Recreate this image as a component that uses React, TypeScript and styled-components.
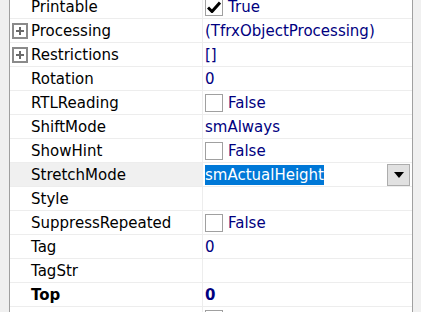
import React from "react";
import styled, { createGlobalStyle } from "styled-components";

const Global = createGlobalStyle`
  html, body { margin: 0; padding: 0; background: #fff; }
  body { width: 421px; height: 312px; overflow: hidden; font-family: "DejaVu Sans", sans-serif; }
`;

const Frame = styled.div`
  display: flex;
  width: 421px;
  height: 312px;
  overflow: hidden;
  background: #fff;
`;

const Gutter = styled.div`
  width: 9px;
  flex: none;
  background: #f0f0f0;
  border-right: 1px solid #a0a0a0;
`;

const Grid = styled.div`
  flex: 1;
  display: flex;
  flex-direction: column;
  margin-top: -5px;
  border-right: 1px solid #a0a0a0;
`;

const RightStrip = styled.div`
  width: 8px;
  flex: none;
  background: #f0f0f0;
`;

const Row = styled.div`
  display: grid;
  grid-template-columns: 193px 1fr;
  height: 23px;
  border-bottom: 1px solid #ededed;
  flex: none;
`;

const NameCell = styled.div<{ $active?: boolean; $bold?: boolean }>`
  display: flex;
  align-items: center;
  gap: 3px;
  padding-left: 21px;
  background: ${(p) => (p.$active ? "#f0f0f0" : "#fff")};
  border-right: 1px solid #ededed;
  font-size: 15px;
  color: #000;
  font-weight: ${(p) => (p.$bold ? 700 : 400)};
  white-space: nowrap;
`;

const Expander = styled.span`
  width: 12px;
  height: 12px;
  margin-left: -19px;
  border: 2px solid #8a8a8a;
  position: relative;
  flex: none;
  &::before, &::after {
    content: "";
    position: absolute;
    background: #6a6a6a;
  }
  &::before { left: 2px; right: 2px; top: 5px; height: 2px; }
  &::after { top: 2px; bottom: 2px; left: 5px; width: 2px; }
`;

const ValueCell = styled.div<{ $bold?: boolean }>`
  display: flex;
  align-items: center;
  padding-left: 2px;
  padding-right: 2px;
  font-size: 15px;
  color: #000080;
  font-weight: ${(p) => (p.$bold ? 700 : 400)};
  white-space: nowrap;
`;

const Check = styled.span`
  width: 16px;
  height: 16px;
  border: 1px solid #a0a0a0;
  background: #fff;
  margin-right: 5px;
  flex: none;
  display: flex;
  align-items: center;
  justify-content: center;
`;

const Selected = styled.span`
  background: #0078d7;
  color: #fff;
  line-height: 20px;
`;

const Spacer = styled.span`
  flex: 1;
`;

const DropButton = styled.span`
  width: 21px;
  height: 20px;
  border: 1px solid #adadad;
  background: #e1e1e1;
  display: flex;
  align-items: center;
  justify-content: center;
  flex: none;
`;

type Prop = {
  name: string;
  value?: string;
  check?: boolean;
  expand?: boolean;
  bold?: boolean;
  active?: boolean;
};

const props: Prop[] = [
  { name: "Printable", value: "True", check: true },
  { name: "Processing", value: "(TfrxObjectProcessing)", expand: true },
  { name: "Restrictions", value: "[]", expand: true },
  { name: "Rotation", value: "0" },
  { name: "RTLReading", value: "False", check: false },
  { name: "ShiftMode", value: "smAlways" },
  { name: "ShowHint", value: "False", check: false },
  { name: "StretchMode", value: "smActualHeight", active: true },
  { name: "Style", value: "" },
  { name: "SuppressRepeated", value: "False", check: false },
  { name: "Tag", value: "0" },
  { name: "TagStr", value: "" },
  { name: "Top", value: "0", bold: true },
  { name: "Visible", value: "True", check: false },
];

const CheckMark = () => (
  <svg width="14" height="12" viewBox="0 0 14 12">
    <path d="M1 6.5 L5 10.5 L13 1.5" fill="none" stroke="#000" strokeWidth="3" />
  </svg>
);

export default function App() {
  return (
    <Frame>
      <Global />
      <Gutter />
      <Grid>
        {props.map((p) => (
          <Row key={p.name}>
            <NameCell $active={p.active} $bold={p.bold}>
              {p.expand && <Expander />}
              {p.name}
            </NameCell>
            <ValueCell $bold={p.bold}>
              {p.check !== undefined && (
                <Check>{p.check && <CheckMark />}</Check>
              )}
              {p.active ? (
                <>
                  <Selected>{p.value}</Selected>
                  <Spacer />
                  <DropButton>
                    <svg width="10" height="6" viewBox="0 0 10 6">
                      <path d="M0 0 H10 L5 6 Z" fill="#000" />
                    </svg>
                  </DropButton>
                </>
              ) : (
                p.value
              )}
            </ValueCell>
          </Row>
        ))}
      </Grid>
      <RightStrip />
    </Frame>
  );
}
